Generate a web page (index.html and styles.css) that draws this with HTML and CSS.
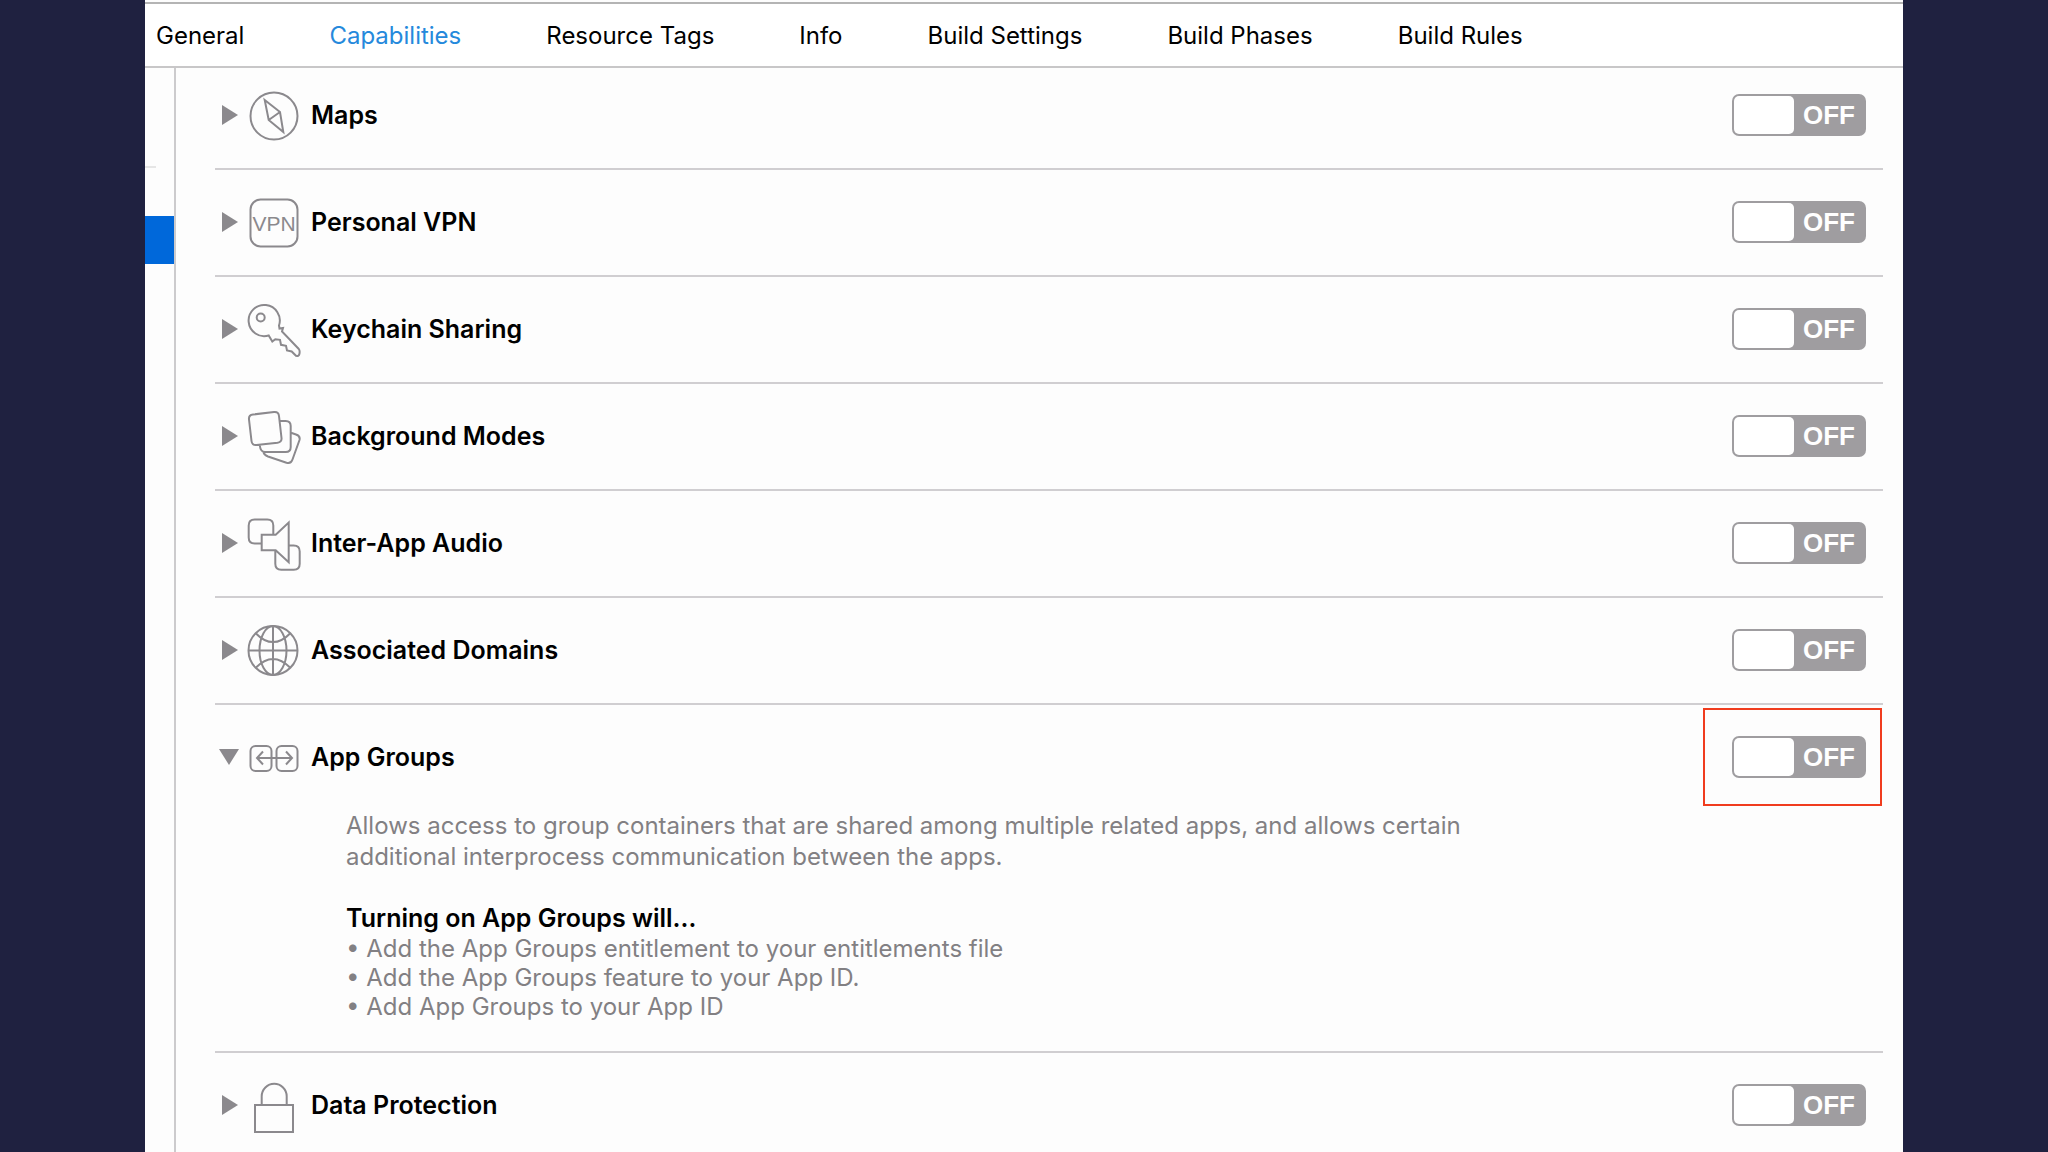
FILE: index.html
```html
<!DOCTYPE html>
<html lang="en">
<head>
<meta charset="utf-8">
<title>Capabilities</title>
<link rel="stylesheet" href="styles.css">
</head>
<body>
<div class="window">
  <nav class="tabs" aria-label="Target settings">
    <a class="tab" href="#general">General</a>
    <a class="tab tab-active" href="#capabilities" aria-current="page">Capabilities</a>
    <a class="tab" href="#tags">Resource Tags</a>
    <a class="tab" href="#info">Info</a>
    <a class="tab" href="#settings">Build Settings</a>
    <a class="tab" href="#phases">Build Phases</a>
    <a class="tab" href="#rules">Build Rules</a>
  </nav>
  <div class="content">
    <aside class="sidebar">
      <div class="sidebar-divider"></div>
      <div class="sidebar-selection"></div>
    </aside>
    <main class="capabilities">
      <section class="capability">
        <div class="row">
          <button class="disclosure" type="button" aria-label="Show Maps" aria-expanded="false"><svg viewBox="0 0 20 20"><path d="M3 0v20l16-10z"/></svg></button>
          <svg class="icon" viewBox="0 0 56 56"><circle cx="28" cy="28" r="23.5"/><path d="M18.7 12 34 24l3.3 20-14.6-12zM34 24l-11.300 8"/></svg>
          <h2 class="name">Maps</h2>
          <label class="switch"><input type="checkbox" role="switch" aria-label="Maps"><span>OFF</span></label>
        </div>
      </section>
      <section class="capability">
        <div class="row">
          <button class="disclosure" type="button" aria-label="Show Personal VPN" aria-expanded="false"><svg viewBox="0 0 20 20"><path d="M3 0v20l16-10z"/></svg></button>
          <svg class="icon" viewBox="0 0 56 56"><rect x="4.500" y="4.500" width="47" height="47" rx="10"/><text class="icon-text" x="28" y="36" text-anchor="middle">VPN</text></svg>
          <h2 class="name">Personal VPN</h2>
          <label class="switch"><input type="checkbox" role="switch" aria-label="Personal VPN"><span>OFF</span></label>
        </div>
      </section>
      <section class="capability">
        <div class="row">
          <button class="disclosure" type="button" aria-label="Show Keychain Sharing" aria-expanded="false"><svg viewBox="0 0 20 20"><path d="M3 0v20l16-10z"/></svg></button>
          <svg class="icon" viewBox="0 0 56 56"><circle cx="14.700" cy="15.500" r="4"/><path d="M22.700 33.500A15.600 15.600 0 1 1 33 23.500L33.500 26.500 37 26l-1 3.500 16.800 17.500Q54 48.500 53.500 51.500T50 53.800L45.700 49.500 41 48.500 40 43.800 35 42.800 34 37.800 29.300 37.200 26.300 39.500z"/></svg>
          <h2 class="name">Keychain Sharing</h2>
          <label class="switch"><input type="checkbox" role="switch" aria-label="Keychain Sharing"><span>OFF</span></label>
        </div>
      </section>
      <section class="capability">
        <div class="row">
          <button class="disclosure" type="button" aria-label="Show Background Modes" aria-expanded="false"><svg viewBox="0 0 20 20"><path d="M3 0v20l16-10z"/></svg></button>
          <svg class="icon" viewBox="0 0 56 56"><path d="M7 5.500 28 3Q32.500 2.500 33 7L35.500 29Q36 33 31.500 33.800L10.500 36Q6 36.500 5.500 32L3 10.500Q2.500 6 7 5.500zM34 12h5.700Q44.700 12 44.700 17V38Q44.700 43 39.700 43H19Q14.500 43 13.800 36.500M45 23.800 50 25.500Q54.500 27 53.500 31L46.500 50.500Q45 55 40.500 53.700L22 47.500Q18 46 17.500 43"/></svg>
          <h2 class="name">Background Modes</h2>
          <label class="switch"><input type="checkbox" role="switch" aria-label="Background Modes"><span>OFF</span></label>
        </div>
      </section>
      <section class="capability">
        <div class="row">
          <button class="disclosure" type="button" aria-label="Show Inter-App Audio" aria-expanded="false"><svg viewBox="0 0 20 20"><path d="M3 0v20l16-10z"/></svg></button>
          <svg class="icon" viewBox="0 0 56 56"><path d="M15.700 27.500H8.700Q2.700 27.500 2.700 21.500V9.500Q2.700 3.500 8.700 3.500H21.300Q27.300 3.500 27.300 9.500V18.800M15.700 18.800h14L42.700 6.500v39.700L29.700 34.200h-14zM42.700 29.500h5Q53.700 29.500 53.700 35.500V47.800Q53.700 53.800 47.700 53.800H35.300Q29.300 53.800 29.300 47.800V34.200"/></svg>
          <h2 class="name">Inter-App Audio</h2>
          <label class="switch"><input type="checkbox" role="switch" aria-label="Inter-App Audio"><span>OFF</span></label>
        </div>
      </section>
      <section class="capability">
        <div class="row">
          <button class="disclosure" type="button" aria-label="Show Associated Domains" aria-expanded="false"><svg viewBox="0 0 20 20"><path d="M3 0v20l16-10z"/></svg></button>
          <svg class="icon" viewBox="0 0 56 56"><circle cx="27" cy="27.500" r="24.500"/><ellipse cx="27" cy="27.500" rx="13.500" ry="24.500"/><path d="M27 3v49M2.500 27.500h49M9.700 10.200Q27 28 44.300 10.200M9.700 44.800Q27 27 44.300 44.800"/></svg>
          <h2 class="name">Associated Domains</h2>
          <label class="switch"><input type="checkbox" role="switch" aria-label="Associated Domains"><span>OFF</span></label>
        </div>
      </section>
      <section class="capability">
        <div class="row">
          <button class="disclosure" type="button" aria-label="Hide App Groups" aria-expanded="true"><svg viewBox="0 0 20 20"><path d="M0 2h20L10 18z"/></svg></button>
          <svg class="icon" viewBox="0 0 56 56"><rect x="4.500" y="16" width="21" height="25" rx="5"/><rect x="30.500" y="16" width="21" height="25" rx="5"/><path d="M11 28h35M17 21.500 11 28l6 6.500M40 21.500l6 6.500-6 6.500"/></svg>
          <h2 class="name">App Groups</h2>
          <label class="switch switch-marked"><input type="checkbox" role="switch" aria-label="App Groups"><span>OFF</span></label>
        </div>
        <div class="details">
          <p class="summary">Allows access to group containers that are shared among multiple related apps, and allows certain additional interprocess communication between the apps.</p>
          <h3 class="effects-title">Turning on App Groups will…</h3>
          <ul class="effects">
            <li>Add the App Groups entitlement to your entitlements file</li>
            <li>Add the App Groups feature to your App ID.</li>
            <li>Add App Groups to your App ID</li>
          </ul>
        </div>
      </section>
      <section class="capability">
        <div class="row">
          <button class="disclosure" type="button" aria-label="Show Data Protection" aria-expanded="false"><svg viewBox="0 0 20 20"><path d="M3 0v20l16-10z"/></svg></button>
          <svg class="icon" viewBox="0 0 56 56"><rect x="9" y="27" width="38" height="27"/><path d="M15.700 27V18.300a12.500 12.500 0 0 1 25 0V27"/></svg>
          <h2 class="name">Data Protection</h2>
          <label class="switch"><input type="checkbox" role="switch" aria-label="Data Protection"><span>OFF</span></label>
        </div>
      </section>
    </main>
  </div>
</div>
</body>
</html>
```
FILE: styles.css
```css
* {
  box-sizing: border-box;
}

body {
  margin: 0;
  padding: 0 145px;
  background: #1f2140;
  color: #000;
  font: 24px/31px Inter, "Liberation Sans", sans-serif;
}

h2, h3, p, ul {
  margin: 0;
  padding: 0;
}

h2, h3 {
  font-size: 25px;
  font-weight: 600;
}

.window {
  display: flex;
  flex-direction: column;
  height: 100vh;
  padding-top: 2px;
  background: #fdfdfd;
}

.tabs {
  display: flex;
  flex: none;
  align-items: center;
  gap: 85px;
  height: 66px;
  padding: 0 11px;
  border-top: 2px solid #b4b4b4;
  border-bottom: 2px solid #c8c7c8;
  background: #fff;
}

.tab {
  color: #000;
  text-decoration: none;
  white-space: nowrap;
}

.tab-active {
  color: #2589dc;
}

.content {
  display: flex;
  flex: 1;
  min-height: 0;
}

.sidebar {
  flex: none;
  width: 31px;
  padding-top: 98px;
  border-right: 2px solid #cccbcd;
}

.sidebar-divider {
  width: 11px;
  height: 2px;
  background: #e6e6e6;
}

.sidebar-selection {
  height: 48px;
  margin-top: 48px;
  background: #0068da;
}

.capabilities {
  flex: 1;
  padding: 0 20px 0 39px;
  overflow-y: auto;
  scrollbar-width: none;
}

.capability {
  border-bottom: 2px solid #d0ced1;
}

.capability:first-child {
  margin-top: -5px;
}

.row {
  display: flex;
  align-items: center;
  height: 105px;
  padding: 0 17px 0 4px;
}

.disclosure {
  width: 20px;
  height: 20px;
  margin: 0 7px 2px 0;
  padding: 0;
  border: 0;
  background: none;
}

.disclosure svg {
  display: block;
  fill: #8b898d;
}

.icon {
  width: 56px;
  height: 56px;
  margin-right: 9px;
  fill: none;
  stroke: #8b898d;
  stroke-width: 2;
}

.icon-text {
  fill: #8b898d;
  stroke: none;
  font: 21px "Liberation Sans", sans-serif;
}

.name {
  flex: 1;
}

.switch {
  position: relative;
  display: flex;
  align-items: center;
  width: 134px;
  height: 42px;
  margin-bottom: 2px;
  padding: 2px;
  border-radius: 7px;
  background: #9f9da0;
  color: #fff;
  font: bold 26px/38px "Liberation Sans", sans-serif;
}

.switch input {
  width: 60px;
  height: 38px;
  margin: 0;
  border-radius: 5px;
  background: #fff;
  appearance: none;
}

.switch span {
  flex: 1;
  padding-left: 9px;
}

.switch-marked::after {
  position: absolute;
  inset: -28px -16px -28px -29px;
  border: 2px solid #f03c1e;
  content: "";
}

.details {
  padding: 0 17px 30px 131px;
  color: #828083;
}

.summary {
  max-width: 1140px;
  margin-bottom: 31px;
}

.effects-title {
  color: #000;
}

.effects {
  line-height: 29px;
  list-style: none;
}

.effects li::before {
  content: "• ";
}
```
